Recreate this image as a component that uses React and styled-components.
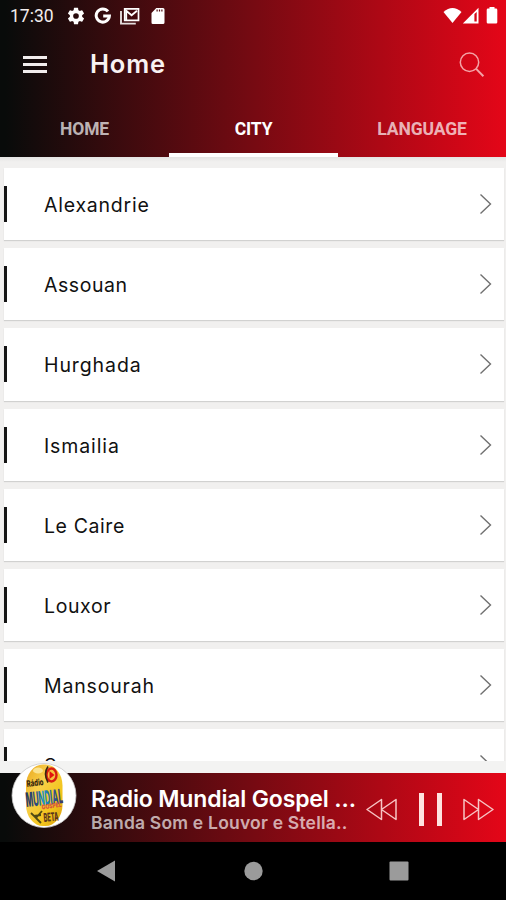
import React from "react";
import styled, { createGlobalStyle } from "styled-components";

const GlobalStyle = createGlobalStyle`
  * {
    box-sizing: border-box;
  }

  body {
    margin: 0;
    background: #000;
    font-family: Inter, "Open Sans", sans-serif;
  }
`;

const gradient = "linear-gradient(90deg, #080b0a 1%, #760a12 50%, #e40618 100%)";

const Screen = styled.div`
  display: flex;
  flex-direction: column;
  width: 506px;
  height: 900px;
  overflow: hidden;
  background: #f3f3f2;
`;

const Header = styled.header`
  flex: none;
  height: 157px;
  background: ${gradient};
  color: #fff;
`;

const StatusBar = styled.div`
  display: flex;
  align-items: center;
  height: 31px;
  padding: 0 8px 0 10px;
`;

const Clock = styled.span`
  width: 57px;
  padding-top: 1px;
  font-family: Roboto, sans-serif;
  font-size: 17.5px;
  line-height: 31px;
  color: #f2eded;
`;

const StatusIcon = styled.svg`
  flex: none;
  display: block;
  width: ${(props) => props.$w}px;
  height: 18px;
  margin-right: ${(props) => props.$gap || 0}px;
  fill: #fff;
`;

const Spacer = styled.div`
  flex: 1;
`;

const Toolbar = styled.div`
  display: flex;
  align-items: center;
  height: 66px;
  padding: 0 20px 0 23px;
`;

const MenuButton = styled.button`
  display: flex;
  flex-direction: column;
  gap: 4px;
  width: 24px;
  margin-right: 43px;
  padding: 0;
  border: none;
  background: none;
`;

const MenuLine = styled.span`
  height: 3px;
  background: #f1eded;
`;

const Title = styled.h1`
  flex: 1;
  margin: 0;
  font-size: 25.5px;
  font-weight: 600;
  line-height: 32px;
  letter-spacing: 0.8px;
  color: #f8f2f2;
`;

const Tabs = styled.nav`
  display: grid;
  grid-template-columns: 169px 169px 168px;
  height: 61px;
`;

const Tab = styled.button`
  padding: 8px 0 0;
  border: none;
  border-bottom: 5px solid ${(props) => (props.$active ? "#fff" : "transparent")};
  background: none;
  font-family: Roboto, sans-serif;
  font-size: 17.5px;
  font-weight: 700;
  letter-spacing: -0.1px;
  color: ${(props) => (props.$active ? "#fff" : "rgba(255, 255, 255, 0.7)")};
`;

const List = styled.main`
  flex: none;
  height: 604px;
  padding: 11px 2px 0 4px;
  overflow: hidden;
  background: linear-gradient(#e4e4e3 0, #f1f0ef 5px);
`;

const Card = styled.div`
  display: flex;
  align-items: center;
  height: 72.2px;
  margin-bottom: 8px;
  padding-right: 12px;
  background: #fff;
  box-shadow: 0 1px 1px rgba(0, 0, 0, 0.13);
`;

const Marker = styled.span`
  width: 3px;
  height: 36px;
  margin-right: 37px;
  background: #151515;
`;

const City = styled.span`
  flex: 1;
  padding-top: 2px;
  font-size: 19.5px;
  line-height: 28px;
  letter-spacing: ${(props) => props.$tracking}px;
  color: #111;
`;

const Chevron = styled.svg`
  width: 13px;
  height: 22px;
  fill: none;
  stroke: #707070;
  stroke-width: 1.4;
`;

const Player = styled.footer`
  display: flex;
  flex: none;
  align-items: center;
  height: 69px;
  margin-top: 12px;
  padding: 0 12px 0 11px;
  background: ${gradient};
`;

const Cover = styled.svg`
  flex: none;
  width: 66px;
  height: 66px;
  margin: -26px 14px 0 0;
`;

const Track = styled.div`
  width: 266px;
  padding-top: 5px;
  white-space: nowrap;
`;

const Station = styled.div`
  font-size: 23px;
  font-weight: 600;
  line-height: 26px;
  letter-spacing: -0.16px;
  color: #fff;
`;

const Song = styled.div`
  font-size: 17.5px;
  font-weight: 600;
  line-height: 22px;
  letter-spacing: 0.2px;
  color: rgba(255, 255, 255, 0.68);
`;

const Controls = styled.div`
  display: flex;
  flex: 1;
  align-items: center;
  justify-content: space-between;
  padding: 3px 0 0 9px;
`;

const SkipIcon = styled.svg`
  width: 31px;
  height: 23px;
  fill: none;
  stroke: #f7c4c4;
  stroke-width: 1.5;
  stroke-linejoin: round;
`;

const Pause = styled.div`
  width: 23px;
  height: 33px;
  border: solid #ffe3e0;
  border-width: 0 5px;
`;

const NavBar = styled.div`
  display: flex;
  flex: none;
  align-items: center;
  height: 58px;
  padding: 0 97px 0 96px;
  justify-content: space-between;
  background: #000;
`;

const NavIcon = styled.svg`
  width: 20px;
  height: 22px;
  fill: #9b9b9b;
`;

const cities = [
  { name: "Alexandrie", tracking: 0.77 },
  { name: "Assouan", tracking: 0.56 },
  { name: "Hurghada", tracking: 0.9 },
  { name: "Ismailia", tracking: 0.88 },
  { name: "Le Caire", tracking: 0.59 },
  { name: "Louxor", tracking: 0.61 },
  { name: "Mansourah", tracking: 0.83 },
  { name: "Suez", tracking: 0.6 },
];

const tabs = ["HOME", "CITY", "LANGUAGE"];

const StationLogo = () => (
  <Cover viewBox="0 0 66 66">
    <defs>
      <linearGradient id="gold" x1="0" y1="0" x2="1" y2="1">
        <stop offset="0" stopColor="#e9a51c" />
        <stop offset="0.35" stopColor="#f8cf4a" />
        <stop offset="0.7" stopColor="#f2c51c" />
        <stop offset="1" stopColor="#d99a10" />
      </linearGradient>
      <linearGradient id="letters" x1="0" y1="0" x2="1" y2="0">
        <stop offset="0" stopColor="#27335c" />
        <stop offset="0.3" stopColor="#2b4d84" />
        <stop offset="0.48" stopColor="#1b98cf" />
        <stop offset="0.65" stopColor="#2a6ba6" />
        <stop offset="1" stopColor="#3b3263" />
      </linearGradient>
    </defs>
    <circle cx="33" cy="33.5" r="32" fill="#fff" stroke="#c9c9c9" strokeWidth="0.8" />
    <rect x="15" y="2.5" width="36.5" height="61.5" rx="17" ry="21" fill="url(#gold)" />
    <ellipse cx="27" cy="8.5" rx="5" ry="3" fill="#fbe391" />
    <ellipse cx="40.5" cy="13" rx="5" ry="6.5" fill="#f5c23c" stroke="#d81e12" strokeWidth="2.4" />
    <path d="M38.5 9v8l5-4z" fill="#e3140d" />
    <path d="M37 4.5q-5 7 0 16" fill="none" stroke="#3a2410" strokeWidth="1.6" />
    <g fontFamily="Inter, sans-serif" fontWeight="800">
      <text x="16" y="25" fontSize="9" fill="#33230c" textLength="17" lengthAdjust="spacingAndGlyphs" transform="rotate(-7 16 25)">Rádio</text>
      <text x="15.5" y="45" fontSize="20" fill="url(#letters)" textLength="37" lengthAdjust="spacingAndGlyphs" transform="rotate(-6 15.5 45)">MUNDIAL</text>
      <text x="31" y="47.5" fontSize="6.5" fill="#d74e40" textLength="20" lengthAdjust="spacingAndGlyphs" transform="rotate(-8 31 47.5)">GOSPEL</text>
      <text x="33" y="60" fontSize="12" fill="#5a341c" textLength="15" lengthAdjust="spacingAndGlyphs" transform="rotate(-6 33 60)">BETA</text>
    </g>
    <path d="M20 51l5 5 6-7M25 56l5 5M23 54l7-1" fill="none" stroke="#4f4a14" strokeWidth="1.8" />
  </Cover>
);

const App = () => {
  return (
    <>
      <GlobalStyle />
      <Screen>
        <Header>
          <StatusBar>
            <Clock>17:30</Clock>
            <StatusIcon $w={18} $gap={9} viewBox="1.5 1.5 21 21">
              <path d="M19.14 12.94c.04-.3.06-.61.06-.94s-.02-.64-.07-.94l2.03-1.58a.49.49 0 0 0 .12-.61l-1.92-3.32a.49.49 0 0 0-.59-.22l-2.39.96a7 7 0 0 0-1.62-.94l-.36-2.54a.48.48 0 0 0-.48-.41h-3.84a.47.47 0 0 0-.47.41l-.36 2.54c-.59.24-1.13.57-1.62.94l-2.39-.96a.48.48 0 0 0-.59.22L2.74 8.87a.47.47 0 0 0 .12.61l2.03 1.58a6 6 0 0 0 0 1.88l-2.03 1.58a.49.49 0 0 0-.12.61l1.92 3.32c.12.22.37.29.59.22l2.39-.96c.5.38 1.03.7 1.62.94l.36 2.54c.05.24.24.41.48.41h3.84c.24 0 .44-.17.47-.41l.36-2.54a7 7 0 0 0 1.62-.94l2.39.96c.22.08.47 0 .59-.22l1.92-3.32a.47.47 0 0 0-.12-.61zM12 15.3a3.3 3.3 0 1 1 0-6.6 3.3 3.3 0 0 1 0 6.6z" />
            </StatusIcon>
            <StatusIcon $w={18} $gap={8} viewBox="0 0 18 18">
              <path d="M14 4.4A6.6 6.6 0 1 0 15.4 9H9.2" fill="none" stroke="#fff" strokeWidth="3" />
            </StatusIcon>
            <StatusIcon $w={20} $gap={11} viewBox="0 0 20 18">
              <path d="M1 4v12.6h14.8" fill="none" stroke="#e4dddd" strokeWidth="1.9" />
              <path d="M4.7 1.8h13.8v11.5H4.7z" fill="none" stroke="#fff" strokeWidth="1.7" />
              <path d="M6.2 13V3.8l5.4 4.4L17 3.8" fill="none" stroke="#fff" strokeWidth="1.9" />
            </StatusIcon>
            <StatusIcon $w={14} viewBox="0 0 14 18">
              <path fillRule="evenodd" d="M5.3 1H12a1.5 1.5 0 0 1 1.5 1.5v13A1.5 1.5 0 0 1 12 17H1.9a1.4 1.4 0 0 1-1.4-1.5V6zM5.5 2.5v2h1.2v-2zm2.4 0v2h1.2v-2zm2.4 0v2h1.2v-2z" />
            </StatusIcon>
            <Spacer />
            <StatusIcon $w={19} viewBox="0 0 19 18">
              <path d="M.5 5Q9.5-3.2 18.5 5L9.5 16z" />
            </StatusIcon>
            <StatusIcon $w={17} $gap={7} viewBox="0 0 17 18">
              <path fillRule="evenodd" d="M16.5 .8V16.5H.8zM12.4 7v7.5h2.3V5z" />
            </StatusIcon>
            <StatusIcon $w={12} viewBox="0 0 12 18">
              <path d="M3.5 1.6V0h5v1.6H10a1.3 1.3 0 0 1 1.3 1.3v12.3A1.3 1.3 0 0 1 10 16.5H2a1.3 1.3 0 0 1-1.3-1.3V2.9A1.3 1.3 0 0 1 2 1.6z" />
            </StatusIcon>
          </StatusBar>
          <Toolbar>
            <MenuButton>
              <MenuLine />
              <MenuLine />
              <MenuLine />
            </MenuButton>
            <Title>Home</Title>
            <svg width="27" height="27" viewBox="0 0 27 27" fill="none" stroke="#f4a3a6" strokeWidth="1.5">
              <circle cx="10.5" cy="11.2" r="9.2" />
              <path d="M17.2 17.9l7.2 7.4" strokeWidth="2" />
            </svg>
          </Toolbar>
          <Tabs>
            {tabs.map((tab) => (
              <Tab key={tab} $active={tab === "CITY"}>
                {tab}
              </Tab>
            ))}
          </Tabs>
        </Header>
        <List>
          {cities.map((city) => (
            <Card key={city.name}>
              <Marker />
              <City $tracking={city.tracking}>{city.name}</City>
              <Chevron viewBox="0 0 13 22">
                <path d="M1.5 1.5L11.5 11l-10 9.5" />
              </Chevron>
            </Card>
          ))}
        </List>
        <Player>
          <StationLogo />
          <Track>
            <Station>Radio Mundial Gospel ...</Station>
            <Song>Banda Som e Louvor e Stella..</Song>
          </Track>
          <Controls>
            <SkipIcon viewBox="0 0 31 23">
              <path d="M15.5 1.5v20L1 11.5zM30 1.5v20l-14.5-10z" />
            </SkipIcon>
            <Pause />
            <SkipIcon viewBox="0 0 31 23">
              <path d="M1 1.5v20l14.5-10zM15.5 1.5v20l14.5-10z" />
            </SkipIcon>
          </Controls>
        </Player>
        <NavBar>
          <NavIcon viewBox="0 0 20 22">
            <path d="M19 .5v21L1 11z" />
          </NavIcon>
          <NavIcon viewBox="0 0 20 22">
            <circle cx="10.5" cy="11" r="9.2" />
          </NavIcon>
          <NavIcon viewBox="0 0 20 22">
            <rect x=".5" y="1.5" width="19" height="19" rx="1" />
          </NavIcon>
        </NavBar>
      </Screen>
    </>
  );
};

export default App;
